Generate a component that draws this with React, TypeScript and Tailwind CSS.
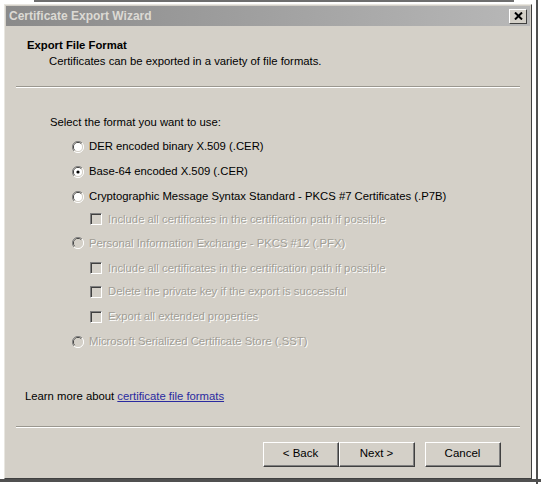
import React from 'react';

const font = "font-['Liberation_Sans',Arial,sans-serif]";

const Radio: React.FC<{ checked?: boolean; disabled?: boolean }> = ({ checked, disabled }) => (
  <svg width="12" height="12" viewBox="0 0 12 12" className="shrink-0">
    <path d="M10 2 A5.5 5.5 0 0 0 2 10" fill="none" stroke="#808080" strokeWidth="1" />
    <path d="M9.2 2.8 A4.5 4.5 0 0 0 2.8 9.2" fill="none" stroke="#404040" strokeWidth="1" />
    <path d="M2 10 A5.5 5.5 0 0 0 10 2" fill="none" stroke="#ffffff" strokeWidth="1" />
    <circle cx="6" cy="6" r="4" fill={disabled ? '#d4d0c8' : '#ffffff'} />
    {checked && <circle cx="6" cy="6" r="1.6" fill="#000" />}
  </svg>
);

const Check: React.FC = () => (
  <div className="w-[12px] h-[12px] shrink-0 border-t border-l border-t-[#808080] border-l-[#808080] border-r border-b border-r-white border-b-white">
    <div className="w-full h-full border-t border-l border-[#404040] border-r-0 border-b-0 bg-[#d4d0c8]" />
  </div>
);

const dim = "text-[#a19e96] [text-shadow:1px_1px_0_#ffffff]";

const Btn: React.FC<{ label: string }> = ({ label }) => (
  <div className="w-[76px] h-[25px] border border-t-white border-l-white border-r-[#404040] border-b-[#404040] bg-[#d4d0c8]">
    <div className="w-full h-full flex items-center justify-center border-r border-b border-r-[#808080] border-b-[#808080] text-[11.5px] text-black">
      {label}
    </div>
  </div>
);

const App: React.FC = () => {
  return (
    <div className={`w-[541px] h-[484px] bg-white overflow-hidden relative ${font}`}>
      <div className="absolute top-0 left-[34px] w-[480px] h-[2px] bg-[#6e6e6e]" />
      <div className="absolute top-0 bottom-0 left-[536px] w-[2px] bg-[#505050]" />
      <div className="absolute left-0 right-0 top-[479px] h-[3px] bg-[#505050]" />

      <div className="ml-[4px] mt-[4px] w-[528px] h-[475px] bg-[#d4d0c8] border border-t-[#e8e6e0] border-l-[#e8e6e0] border-r-[#404040] border-b-[#404040] flex flex-col relative">
        {/* title bar */}
        <div className="h-[20px] mx-[1px] mt-[1px] bg-gradient-to-r from-[#8a8a8a] to-[#b8b8b8] flex items-center justify-between pl-[3px] pr-[3px]">
          <span className="text-[12px] font-bold text-[#dcdad4]">Certificate Export Wizard</span>
          <div className="w-[18px] h-[15px] bg-[#d4d0c8] border border-t-white border-l-white border-r-[#404040] border-b-[#404040] flex items-center justify-center">
            <svg width="9" height="8" viewBox="0 0 9 8">
              <path d="M1 0.5 L8 7.5 M8 0.5 L1 7.5" stroke="#000" strokeWidth="2" />
            </svg>
          </div>
        </div>

        {/* header */}
        <div className="pl-[22px] pt-[11px] h-[60px] text-[11.3px] text-black">
          <div className="font-bold leading-[16px]">Export File Format</div>
          <div className="pl-[22px] leading-[16px]">Certificates can be exported in a variety of file formats.</div>
        </div>
        <div className="mx-[11px] h-[2px] border-t border-[#9a978f] border-b border-b-white" />

        {/* body */}
        <div className="pl-[45px] pt-[26px] text-[11.3px] text-black">
          <div className="leading-[16px]">Select the format you want to use:</div>
          <div className="pl-[22px] mt-[4px] flex flex-col">
            <div className="flex items-center gap-[5px] h-[25px]">
              <Radio />
              <span>DER encoded binary X.509 (.CER)</span>
            </div>
            <div className="flex items-center gap-[5px] h-[25px]">
              <Radio checked />
              <span>Base-64 encoded X.509 (.CER)</span>
            </div>
            <div className="flex items-center gap-[5px] h-[25px]">
              <Radio />
              <span>Cryptographic Message Syntax Standard - PKCS #7 Certificates (.P7B)</span>
            </div>
            <div className="flex items-center gap-[6px] h-[20px] pl-[18px]">
              <Check />
              <span className={dim}>Include all certificates in the certification path if possible</span>
            </div>
            <div className="flex items-center gap-[5px] h-[28px]">
              <Radio disabled />
              <span className={dim}>Personal Information Exchange - PKCS #12 (.PFX)</span>
            </div>
            <div className="flex items-center gap-[6px] h-[22px] pl-[18px]">
              <Check />
              <span className={dim}>Include all certificates in the certification path if possible</span>
            </div>
            <div className="flex items-center gap-[6px] h-[25px] pl-[18px]">
              <Check />
              <span className={dim}>Delete the private key if the export is successful</span>
            </div>
            <div className="flex items-center gap-[6px] h-[25px] pl-[18px]">
              <Check />
              <span className={dim}>Export all extended properties</span>
            </div>
            <div className="flex items-center gap-[5px] h-[25px]">
              <Radio disabled />
              <span className={dim}>Microsoft Serialized Certificate Store (.SST)</span>
            </div>
          </div>
        </div>

        <div className="pl-[20px] mt-[34px] text-[11.3px] text-black leading-[16px]">
          Learn more about <span className="text-[#2a2aa0] underline">certificate file formats</span>
        </div>

        <div className="mx-[11px] mt-[22px] h-[2px] border-t border-[#9a978f] border-b border-b-white" />

        <div className="flex justify-end pr-[30px] mt-[14px]">
          <Btn label="< Back" />
          <Btn label="Next >" />
          <div className="w-[10px]" />
          <Btn label="Cancel" />
        </div>
      </div>
    </div>
  );
};

export default App;
